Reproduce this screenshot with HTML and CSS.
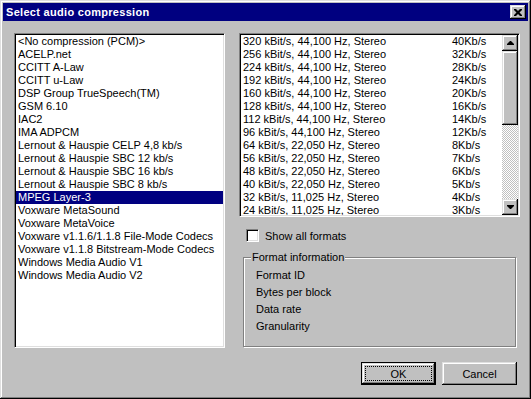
FILE: index.html
```html
<!DOCTYPE html>
<html lang="en">
<head>
    <meta charset="UTF-8">
    <title>Select audio compression</title>
    <link rel="stylesheet" href="styles.css">
</head>
<body>
    <div class="window">
        <div class="titlebar">
            <span class="title">Select audio compression</span>
            <button class="close-btn raised">
                <svg width="8" height="7" viewBox="0 0 8 7"><path d="M0 0h2l2 2 2-2h2v1l-2.5 2.5L8 6v1H6L4 5 2 7H0V6l2.5-2.5L0 1z" fill="#000"/></svg>
            </button>
        </div>

        <div class="content">
            <div class="main">
                <ul class="listbox codecs">
                    <li>&lt;No compression (PCM)&gt;</li>
                    <li>ACELP.net</li>
                    <li>CCITT A-Law</li>
                    <li>CCITT u-Law</li>
                    <li>DSP Group TrueSpeech(TM)</li>
                    <li>GSM 6.10</li>
                    <li>IAC2</li>
                    <li>IMA ADPCM</li>
                    <li>Lernout &amp; Hauspie CELP 4,8 kb/s</li>
                    <li>Lernout &amp; Hauspie SBC 12 kb/s</li>
                    <li>Lernout &amp; Hauspie SBC 16 kb/s</li>
                    <li>Lernout &amp; Hauspie SBC 8 kb/s</li>
                    <li class="selected">MPEG Layer-3</li>
                    <li>Voxware MetaSound</li>
                    <li>Voxware MetaVoice</li>
                    <li>Voxware v1.1.6/1.1.8 File-Mode Codecs</li>
                    <li>Voxware v1.1.8 Bitstream-Mode Codecs</li>
                    <li>Windows Media Audio V1</li>
                    <li>Windows Media Audio V2</li>
                </ul>

                <div class="side">
                    <div class="listbox formats">
                        <ul class="rows">
                            <li><span class="fmt">320 kBit/s, 44,100 Hz, Stereo</span><span>40Kb/s</span></li>
                            <li><span class="fmt">256 kBit/s, 44,100 Hz, Stereo</span><span>32Kb/s</span></li>
                            <li><span class="fmt">224 kBit/s, 44,100 Hz, Stereo</span><span>28Kb/s</span></li>
                            <li><span class="fmt">192 kBit/s, 44,100 Hz, Stereo</span><span>24Kb/s</span></li>
                            <li><span class="fmt">160 kBit/s, 44,100 Hz, Stereo</span><span>20Kb/s</span></li>
                            <li><span class="fmt">128 kBit/s, 44,100 Hz, Stereo</span><span>16Kb/s</span></li>
                            <li><span class="fmt">112 kBit/s, 44,100 Hz, Stereo</span><span>14Kb/s</span></li>
                            <li><span class="fmt">96 kBit/s, 44,100 Hz, Stereo</span><span>12Kb/s</span></li>
                            <li><span class="fmt">64 kBit/s, 22,050 Hz, Stereo</span><span>8Kb/s</span></li>
                            <li><span class="fmt">56 kBit/s, 22,050 Hz, Stereo</span><span>7Kb/s</span></li>
                            <li><span class="fmt">48 kBit/s, 22,050 Hz, Stereo</span><span>6Kb/s</span></li>
                            <li><span class="fmt">40 kBit/s, 22,050 Hz, Stereo</span><span>5Kb/s</span></li>
                            <li><span class="fmt">32 kBit/s, 11,025 Hz, Stereo</span><span>4Kb/s</span></li>
                            <li><span class="fmt">24 kBit/s, 11,025 Hz, Stereo</span><span>3Kb/s</span></li>
                        </ul>
                        <div class="scrollbar">
                            <div class="scroll-btn raised">
                                <svg width="7" height="4" viewBox="0 0 7 4"><path d="M3 0h1l3 3v1H0V3z" fill="#000"/></svg>
                            </div>
                            <div class="thumb raised"></div>
                            <div class="track"></div>
                            <div class="scroll-btn raised">
                                <svg width="7" height="4" viewBox="0 0 7 4"><path d="M0 0h7v1L4 4H3L0 1z" fill="#000"/></svg>
                            </div>
                        </div>
                    </div>

                    <label class="check">
                        <span class="check-box"></span>
                        <span>Show all formats</span>
                    </label>

                    <div class="group">
                        <span class="group-title">Format information</span>
                        <ul class="info-list">
                            <li>Format ID</li>
                            <li>Bytes per block</li>
                            <li>Data rate</li>
                            <li>Granularity</li>
                        </ul>
                    </div>
                </div>
            </div>

            <div class="actions">
                <button class="btn raised btn-default"><span class="focus">OK</span></button>
                <button class="btn raised">Cancel</button>
            </div>
        </div>
    </div>
</body>
</html>
```

FILE: styles.css
```css
body {
    margin: 0;
    font-family: "Liberation Sans", Arial, sans-serif;
    font-size: 11px;
    color: #000;
}
ul { list-style: none; margin: 0; padding: 0; }

.raised {
    background-color: #c0c0c0;
    box-shadow: inset -1px -1px #000, inset 1px 1px #dfdfdf,
                inset -2px -2px #808080, inset 2px 2px #fff;
}

.window {
    width: 531px;
    height: 399px;
    box-sizing: border-box;
    padding: 3px;
    background-color: #c0c0c0;
    box-shadow: inset -1px -1px #000, inset 1px 1px #dfdfdf,
                inset -2px -2px #808080, inset 2px 2px #fff;
}

.titlebar {
    height: 18px;
    background-color: #000080;
    display: flex;
    align-items: center;
    padding-left: 3px;
}
.title {
    flex: 1;
    color: white;
    font-weight: bold;
    font-size: 11px;
    letter-spacing: 0.3px;
}
.close-btn {
    width: 16px;
    height: 14px;
    margin-right: 2px;
    border: none;
    padding: 0;
    display: flex;
    align-items: center;
    justify-content: center;
}

.content {
    padding: 12px 8px 0 11px;
}
.main {
    display: flex;
    gap: 14px;
}

.listbox {
    box-sizing: border-box;
    background-color: white;
    border-style: solid;
    border-width: 1px;
    border-color: #808080 #fff #fff #808080;
    box-shadow: inset 1px 1px #000, inset -1px -1px #dfdfdf;
    padding: 1px;
}
.codecs {
    width: 211px;
    height: 315px;
}
.codecs li {
    height: 13px;
    line-height: 13px;
    padding-left: 2px;
    white-space: nowrap;
}
.codecs li.selected {
    background-color: #000080;
    color: white;
}

.side {
    width: 281px;
}
.formats {
    height: 184px;
    display: flex;
}
.rows {
    flex: 1;
    overflow: hidden;
}
.rows li {
    height: 13px;
    line-height: 13px;
    padding-left: 2px;
    display: flex;
    white-space: nowrap;
}
.fmt { width: 209px; }

.scrollbar {
    width: 16px;
    display: flex;
    flex-direction: column;
}
.scroll-btn {
    height: 16px;
    display: flex;
    align-items: center;
    justify-content: center;
}
.thumb { height: 74px; }
.track {
    flex: 1;
    background: repeating-conic-gradient(#c0c0c0 0 25%, #fff 0 50%) 0 0 / 2px 2px;
}

.check {
    display: flex;
    align-items: center;
    gap: 6px;
    margin-top: 12px;
    padding-left: 7px;
    height: 13px;
}
.check-box {
    width: 13px;
    height: 13px;
    box-sizing: border-box;
    background-color: white;
    border-style: solid;
    border-width: 1px;
    border-color: #808080 #fff #fff #808080;
    box-shadow: inset 1px 1px #000, inset -1px -1px #dfdfdf;
}

.group {
    position: relative;
    margin: 15px 4px 0 4px;
    height: 90px;
    box-sizing: border-box;
    border: 1px solid #808080;
    box-shadow: inset 1px 1px #fff, 1px 1px #fff;
}
.group-title {
    position: absolute;
    top: -7px;
    left: 7px;
    padding: 0 1px;
    line-height: 13px;
    background-color: #c0c0c0;
}
.info-list {
    padding: 9px 0 0 12px;
}
.info-list li {
    line-height: 17px;
}

.actions {
    display: flex;
    justify-content: flex-end;
    gap: 6px;
    margin-top: 14px;
    padding-right: 3px;
}
.btn {
    width: 75px;
    height: 23px;
    border: none;
    padding: 0;
    font-family: "Liberation Sans", Arial, sans-serif;
    font-size: 11px;
    color: #000;
}
.btn-default {
    border: 1px solid #000;
    display: flex;
    padding: 3px;
}
.focus {
    flex: 1;
    border: 1px dotted #000;
    display: flex;
    align-items: center;
    justify-content: center;
}
```
